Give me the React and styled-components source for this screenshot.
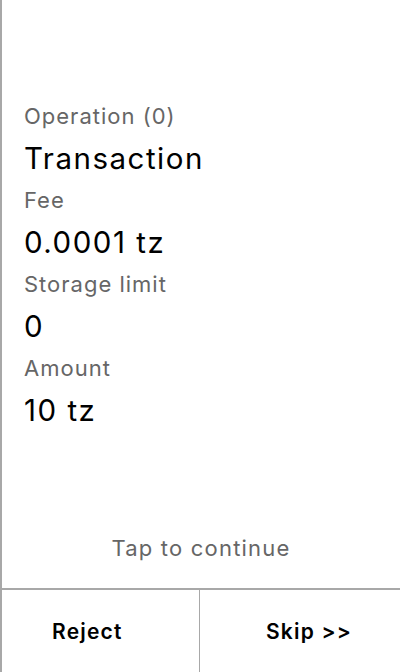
import React from "react";
import styled, { createGlobalStyle } from "styled-components";

const GlobalStyle = createGlobalStyle`
  html, body {
    margin: 0;
    padding: 0;
    background: #ffffff;
  }
  body {
    font-family: Inter, "Noto Sans", sans-serif;
  }
`;

const operation = [
  { label: "Operation (0)", value: "Transaction" },
  { label: "Fee", value: "0.0001 tz" },
  { label: "Storage limit", value: "0" },
  { label: "Amount", value: "10 tz" },
];

export default function App() {
  return (
    <>
      <GlobalStyle />
      <Screen>
        <Details>
          {operation.map((row) => (
            <React.Fragment key={row.label}>
              <Label>{row.label}</Label>
              <Value>{row.value}</Value>
            </React.Fragment>
          ))}
        </Details>
        <Hint>Tap to continue</Hint>
        <Actions>
          <ActionButton pad="50px">Reject</ActionButton>
          <ActionButton pad="66px" divided>
            Skip &gt;&gt;
          </ActionButton>
        </Actions>
      </Screen>
    </>
  );
}

const Screen = styled.div`
  width: 400px;
  height: 672px;
  box-sizing: border-box;
  border-left: 2px solid #a8a8a8;
  display: flex;
  flex-direction: column;
  overflow: hidden;
`;

const Details = styled.div`
  flex: 1;
  padding: 95px 22px 0;
  display: flex;
  flex-direction: column;
`;

const Label = styled.div`
  height: 42px;
  line-height: 42px;
  font-size: 22px;
  letter-spacing: 1px;
  color: #666666;
`;

const Value = styled.div`
  height: 42px;
  line-height: 42px;
  font-size: 29.5px;
  letter-spacing: 1.5px;
  color: #000000;
`;

const Hint = styled.div`
  height: 42px;
  line-height: 42px;
  margin-bottom: 19px;
  text-align: center;
  font-size: 22px;
  letter-spacing: 1.2px;
  color: #666666;
`;

const Actions = styled.div`
  height: 84px;
  box-sizing: border-box;
  display: grid;
  grid-template-columns: 197px 201px;
  border-top: 2px solid #a8a8a8;
`;

const ActionButton = styled.button`
  border: 0;
  border-left: ${(p) => (p.divided ? "1px solid #a8a8a8" : "0")};
  background: transparent;
  padding: 0 0 0 ${(p) => p.pad};
  text-align: left;
  font-family: Inter, "Noto Sans", sans-serif;
  font-weight: 600;
  font-size: 21px;
  letter-spacing: 1.2px;
  color: #000000;
`;
